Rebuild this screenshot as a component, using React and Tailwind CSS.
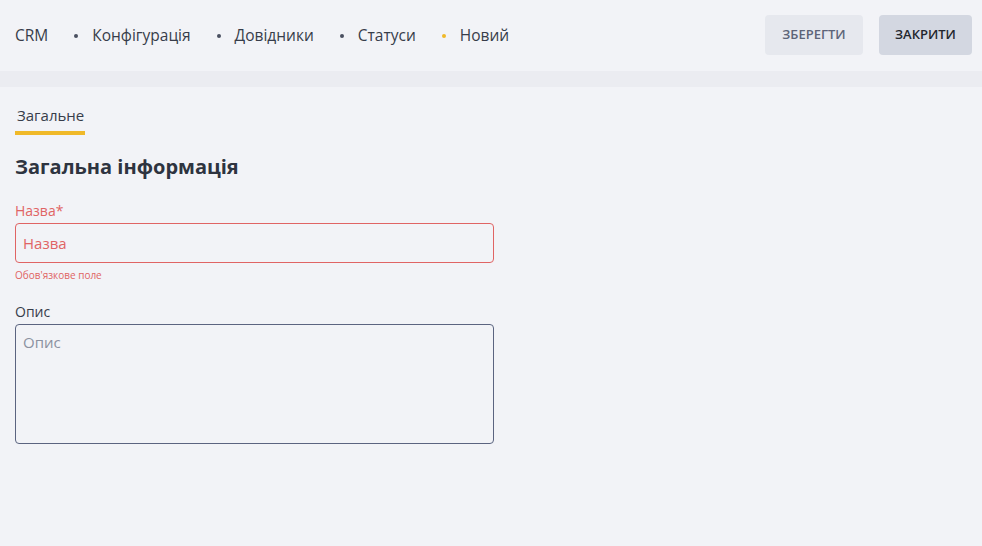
import React from "react";

const crumbs = ["Конфігурація", "Довідники", "Статуси"];

export default function App() {
  return (
    <div
      className="min-h-screen w-full bg-[#f2f3f7] text-[#2e3440]"
      style={{ fontFamily: "'Open Sans', 'Noto Sans', sans-serif" }}
    >
      {/* Header */}
      <header className="flex h-[71px] items-center justify-between pl-[15px] pr-[10px]">
        <nav className="flex items-center text-[15.5px] text-[#373d4a]">
          <span>CRM</span>
          {crumbs.map((c) => (
            <span key={c} className="flex items-center">
              <span className="ml-[26px] mr-[14px] h-[4px] w-[4px] rounded-full bg-[#4a5060]" />
              <span>{c}</span>
            </span>
          ))}
          <span className="flex items-center">
            <span className="ml-[26px] mr-[14px] h-[4px] w-[4px] rounded-full bg-[#f0b929]" />
            <span>Новий</span>
          </span>
        </nav>
        <div className="mb-[2px] flex items-center gap-4">
          <button className="h-[40px] w-[98px] rounded-[4px] bg-[#e6e8ee] text-[13px] font-semibold text-[#5d6478]">
            ЗБЕРЕГТИ
          </button>
          <button className="h-[40px] w-[93px] rounded-[4px] bg-[#d3d7e1] text-[13px] font-semibold text-[#22262e]">
            ЗАКРИТИ
          </button>
        </div>
      </header>

      <div className="h-[16px] bg-[#ebecf1]" />

      {/* Content */}
      <main className="px-[15px] pt-[16px]">
        <div className="inline-flex flex-col">
          <span className="px-[2px] text-[15px] text-[#373d4a]">Загальне</span>
          <span className="mt-[4px] h-[4px] w-[70px] bg-[#f0b929]" />
        </div>

        <h1 className="mt-[17px] text-[20px] font-bold text-[#2e3440]">Загальна інформація</h1>

        <div className="mt-[18px] w-[479px]">
          <label className="block text-[14px] text-[#e06464]">Назва*</label>
          <input
            placeholder="Назва"
            className="mt-[2px] h-[40px] w-full rounded-[4px] border border-[#e06464] bg-transparent px-[7px] text-[15px] outline-none placeholder:text-[#e06464]"
          />
          <p className="mt-[5px] text-[10px] text-[#e06464]">Обов'язкове поле</p>
        </div>

        <div className="mt-[18px] w-[479px]">
          <label className="block text-[14px] text-[#373d4a]">Опис</label>
          <textarea
            placeholder="Опис"
            className="mt-[2px] block h-[120px] w-full resize-none rounded-[4px] border border-[#5b6480] bg-transparent px-[7px] py-[6px] text-[15px] outline-none placeholder:text-[#8b91a0]"
          />
        </div>
      </main>
    </div>
  );
}
